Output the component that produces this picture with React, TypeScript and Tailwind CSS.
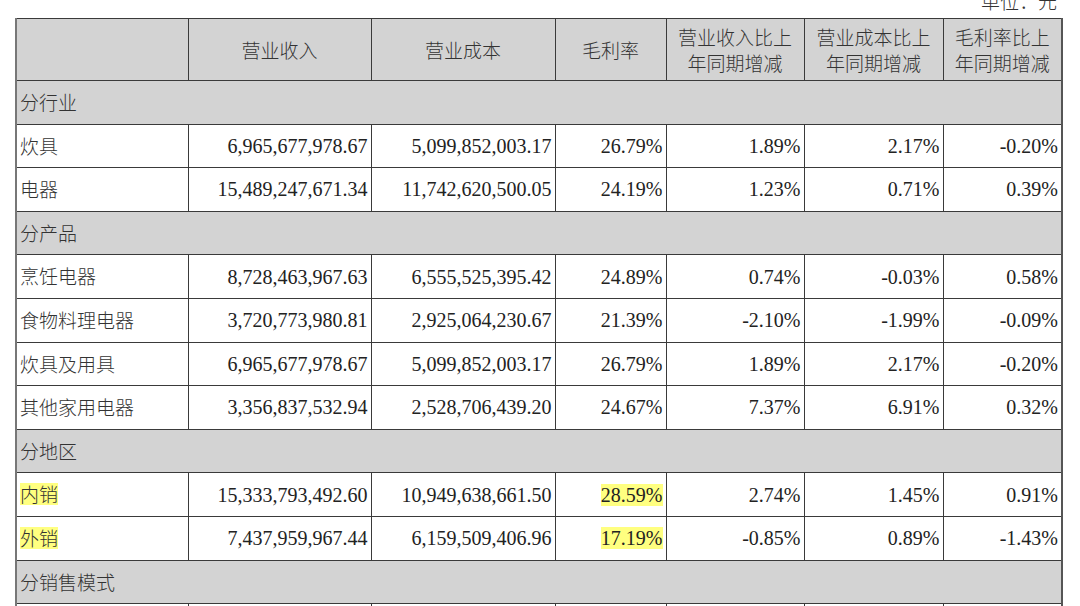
import React from "react";

const cjk = "font-['Noto_Sans_CJK_SC','Noto_Sans',sans-serif] font-light";
const serif = "font-['Liberation_Serif','Times_New_Roman',serif]";

type Row =
  | { kind: "section"; label: string }
  | { kind: "data"; label: string; vals: string[]; hl?: boolean };

const rows: Row[] = [
  { kind: "section", label: "分行业" },
  { kind: "data", label: "炊具", vals: ["6,965,677,978.67", "5,099,852,003.17", "26.79%", "1.89%", "2.17%", "-0.20%"] },
  { kind: "data", label: "电器", vals: ["15,489,247,671.34", "11,742,620,500.05", "24.19%", "1.23%", "0.71%", "0.39%"] },
  { kind: "section", label: "分产品" },
  { kind: "data", label: "烹饪电器", vals: ["8,728,463,967.63", "6,555,525,395.42", "24.89%", "0.74%", "-0.03%", "0.58%"] },
  { kind: "data", label: "食物料理电器", vals: ["3,720,773,980.81", "2,925,064,230.67", "21.39%", "-2.10%", "-1.99%", "-0.09%"] },
  { kind: "data", label: "炊具及用具", vals: ["6,965,677,978.67", "5,099,852,003.17", "26.79%", "1.89%", "2.17%", "-0.20%"] },
  { kind: "data", label: "其他家用电器", vals: ["3,356,837,532.94", "2,528,706,439.20", "24.67%", "7.37%", "6.91%", "0.32%"] },
  { kind: "section", label: "分地区" },
  { kind: "data", label: "内销", hl: true, vals: ["15,333,793,492.60", "10,949,638,661.50", "28.59%", "2.74%", "1.45%", "0.91%"] },
  { kind: "data", label: "外销", hl: true, vals: ["7,437,959,967.44", "6,159,509,406.96", "17.19%", "-0.85%", "0.89%", "-1.43%"] },
  { kind: "section", label: "分销售模式" },
  { kind: "data", label: "", vals: ["", "", "", "", "", ""] },
];

const widths = [172, 183, 184, 111, 138, 139, 119];

export default function App() {
  return (
    <div className="w-[1080px] h-[606px] overflow-hidden bg-white text-[#2a2a2a]">
      <div className="h-[18px] flex justify-end items-end pr-[23px]">
        <span className={`${cjk} text-[19px] leading-[19px] mb-[8px] text-[#333]`}>单位：元</span>
      </div>
      <table className="ml-[15px] w-[1047px] table-fixed border-collapse">
        <colgroup>
          {widths.map((w, i) => (
            <col key={i} style={{ width: w }} />
          ))}
        </colgroup>
        <thead>
          <tr className="h-[62px] bg-[#d3d3d3]">
            <th className="border border-[#3a3a3a] border-l-2 border-l-[#777]"></th>
            <th className={`border border-[#3a3a3a] ${cjk} text-[19px] leading-[26px] text-[#333]`}>营业收入</th>
            <th className={`border border-[#3a3a3a] ${cjk} text-[19px] leading-[26px] text-[#333]`}>营业成本</th>
            <th className={`border border-[#3a3a3a] ${cjk} text-[19px] leading-[26px] text-[#333]`}>毛利率</th>
            <th className={`border border-[#3a3a3a] ${cjk} text-[19px] leading-[26px] text-[#333]`}>
              营业收入比上<br />年同期增减
            </th>
            <th className={`border border-[#3a3a3a] ${cjk} text-[19px] leading-[26px] text-[#333]`}>
              营业成本比上<br />年同期增减
            </th>
            <th className={`border border-[#3a3a3a] border-r-2 border-r-[#555] ${cjk} text-[19px] leading-[26px] text-[#333]`}>
              毛利率比上<br />年同期增减
            </th>
          </tr>
        </thead>
        <tbody>
          {rows.map((r, i) =>
            r.kind === "section" ? (
              <tr key={i} className="h-[43.6px] bg-[#d3d3d3]">
                <td
                  colSpan={7}
                  className={`border border-[#3a3a3a] border-l-2 border-l-[#777] border-r-2 border-r-[#555] pl-[3px] ${cjk} text-[19px] text-[#333] align-middle`}
                >
                  {r.label}
                </td>
              </tr>
            ) : (
              <tr key={i} className="h-[43.6px] bg-white">
                <td className={`border border-[#3a3a3a] border-l-2 border-l-[#777] pl-[3px] ${cjk} text-[19px] text-[#333] align-middle`}>
                  {r.hl ? (
                    <span className="inline-block bg-[#ffff80] leading-[22px]">{r.label}</span>
                  ) : (
                    r.label
                  )}
                </td>
                {r.vals.map((v, j) => (
                  <td
                    key={j}
                    className={`border border-[#3a3a3a] ${j === 5 ? "border-r-2 border-r-[#555]" : ""} pr-[3px] text-right ${serif} text-[20px] text-[#222] align-middle`}
                  >
                    {r.hl && j === 2 ? (
                      <span className="inline-block bg-[#ffff80] leading-[22px]">{v}</span>
                    ) : (
                      v
                    )}
                  </td>
                ))}
              </tr>
            )
          )}
        </tbody>
      </table>
    </div>
  );
}
